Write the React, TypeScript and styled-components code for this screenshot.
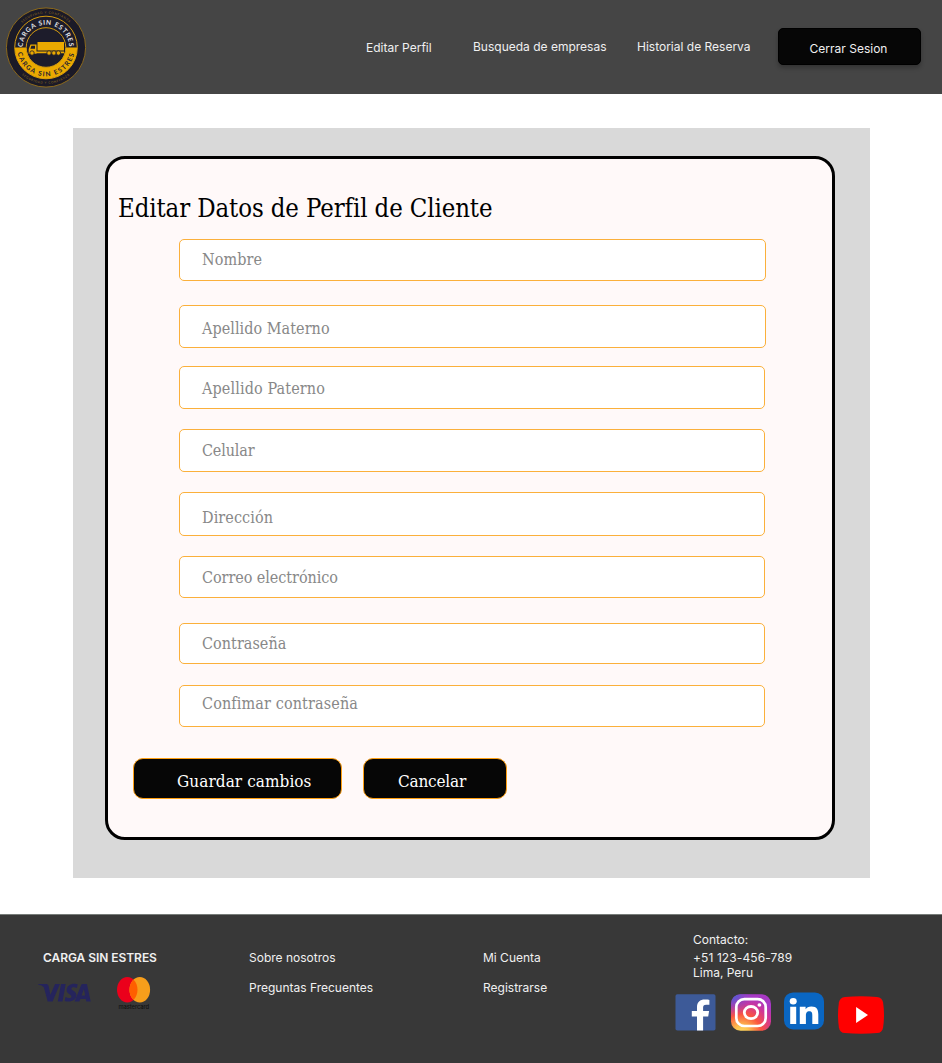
import React from "react";
import styled, { createGlobalStyle } from "styled-components";

const GlobalStyle = createGlobalStyle`
  *, *::before, *::after { box-sizing: border-box; }
  body {
    margin: 0;
    background: #fff;
    font-family: Inter, "Liberation Sans", sans-serif;
  }
`;

const serif = `"DejaVu Serif Condensed", "DejaVu Serif", serif`;

const Page = styled.div`
  width: 942px;
  height: 1063px;
  display: flex;
  flex-direction: column;
  overflow: hidden;
`;

const Header = styled.header`
  height: 94px;
  flex: none;
  display: flex;
  align-items: flex-start;
  background: #454545;
  padding-left: 5px;
`;

const LogoBox = styled.div`
  width: 82px;
  padding-top: 7px;
  margin-right: 279px;
`;

const Nav = styled.nav`
  display: flex;
  align-items: flex-start;
`;

const NavLink = styled.a<{ $width: number; $top: number }>`
  width: ${(p) => p.$width}px;
  margin-top: ${(p) => p.$top}px;
  font-size: 12px;
  line-height: 16px;
  color: #f0f0f0;
  white-space: nowrap;
`;

const LogoutButton = styled.button`
  width: 143px;
  height: 37px;
  margin-top: 28px;
  padding: 4px 0 0;
  border: 1px solid #000;
  border-radius: 5px;
  background: #060606;
  box-shadow: 0 3px 4px rgba(0, 0, 0, 0.25);
  color: #f0f0f0;
  font: 12px/16px Inter, "Liberation Sans", sans-serif;
  text-indent: -2px;
`;

const Panel = styled.main`
  width: 797px;
  height: 750px;
  flex: none;
  margin: 34px 0 36px 73px;
  padding: 28px 35px 38px 32px;
  background: #d9d9d9;
`;

const Card = styled.form`
  height: 684px;
  display: flex;
  flex-direction: column;
  border: 3px solid #000;
  border-radius: 20px;
  background: #fff9f9;
`;

const Title = styled.h1`
  margin: 32px 0 0 10px;
  height: 48px;
  font: 400 25.5px/34px ${serif};
  letter-spacing: -0.1px;
  color: #000;
  white-space: nowrap;
`;

const Field = styled.label<{ $w: number; $h: number; $gap: number; $top: number; $spacing: number }>`
  width: ${(p) => p.$w}px;
  height: ${(p) => p.$h}px;
  flex: none;
  margin: 0 0 ${(p) => p.$gap}px 71px;
  padding: ${(p) => p.$top}px 0 0 22px;
  border: 1px solid #fbb03b;
  border-radius: 5px;
  background: #fff;
  font: 16px/20px ${serif};
  letter-spacing: ${(p) => p.$spacing}px;
  color: #888;
  white-space: nowrap;
`;

const Actions = styled.div`
  display: flex;
  gap: 21px;
  margin-left: 25px;
`;

const ActionButton = styled.button<{ $w: number; $left: number; $spacing: number }>`
  width: ${(p) => p.$w}px;
  height: 41px;
  padding: 4px 0 0 ${(p) => p.$left}px;
  border: 1px solid #ffa012;
  border-radius: 10px;
  background: #060606;
  color: #fff;
  font: 17px/22px ${serif};
  letter-spacing: ${(p) => p.$spacing}px;
  text-align: left;
  white-space: nowrap;
`;

const Footer = styled.footer`
  height: 149px;
  flex: none;
  display: flex;
  border-top: 1px solid #777c79;
  background: #383838;
  color: #f0f0f0;
  font-size: 12px;
  line-height: 16px;
  white-space: nowrap;
`;

const BrandColumn = styled.section`
  width: 249px;
  padding: 35px 0 0 38px;
`;

const BrandName = styled.div`
  padding-left: 5px;
  font-weight: 600;
  letter-spacing: -0.05px;
`;

const Payments = styled.div`
  display: flex;
  gap: 26px;
  margin-top: 10px;
`;

const LinkColumn = styled.section<{ $w: number }>`
  width: ${(p) => p.$w}px;
  display: flex;
  flex-direction: column;
  gap: 14px;
  padding-top: 35px;
`;

const ContactColumn = styled.section`
  padding-top: 17px;
`;

const ContactLine = styled.div<{ $gap?: number; $spacing?: number }>`
  height: 15px;
  padding-left: 18px;
  margin-bottom: ${(p) => p.$gap ?? 0}px;
  letter-spacing: ${(p) => p.$spacing ?? 0}px;
`;

const Socials = styled.div`
  display: flex;
  align-items: flex-start;
  margin-top: 12px;
`;

const SocialLink = styled.a<{ $top: number; $gap: number }>`
  display: block;
  height: 40px;
  margin: ${(p) => p.$top}px ${(p) => p.$gap}px 0 0;
`;

const Block = styled.svg`
  display: block;
`;

function Logo() {
  return (
    <Block width="82" height="82" viewBox="0 0 82 82">
      <defs>
        <path id="arcTop" d="M17.7 41a23.3 23.3 0 0 1 46.6 0" />
        <path id="arcBottom" d="M12.2 40.5a28.8 28.8 0 0 0 57.6 0" />
        <path id="rimTop" d="M6.5 41a34.5 34.5 0 0 1 69 0" />
        <path id="rimBottom" d="M4.6 40.5a36.4 36.4 0 0 0 72.8 0" />
      </defs>
      <circle cx="41" cy="40.5" r="39.6" fill="#1b1a27" stroke="#8b681b" strokeWidth="1" />
      <circle cx="41" cy="40.5" r="31.3" fill="#1d1c2b" stroke="#d39a10" strokeWidth="1" />
      <path d="M9.8 40.5h62.4a31.2 31.2 0 0 1-62.4 0z" fill="#eba900" />
      <circle cx="41" cy="40.5" r="19.8" fill="#1d1c2b" stroke="#d39a10" strokeWidth="1" />
      <g fontFamily="Lato, sans-serif" textAnchor="middle">
        <g fontSize="6.6" fontWeight="700">
          <text fill="#e4e4e8" letterSpacing="0.75"><textPath href="#arcTop" startOffset="50%">CARGA SIN ESTRES</textPath></text>
          <text fill="#252130" letterSpacing="1.3"><textPath href="#arcBottom" startOffset="50%">CARGA SIN ESTRES</textPath></text>
        </g>
        <g fontSize="3" letterSpacing="0.7" fill="#9b741c">
          <text><textPath href="#rimTop" startOffset="50%">SEGURIDAD Y CONFIANZA</textPath></text>
          <text><textPath href="#rimBottom" startOffset="50%">SEGURIDAD Y CONFIANZA</textPath></text>
        </g>
      </g>
      <path d="M32.5 35h26.5v8.4H32.5zM25.5 37.5h6v9.3h-7.8V42zM31 44.4h28v1.8H31z" fill="#eba900" />
      <path d="M26.4 38.8h3.6v3h-4.6z" fill="#1d1c2b" />
      <g fill="#eba900" stroke="#1d1c2b" strokeWidth="0.8">
        <circle cx="27" cy="46" r="2.2" />
        <circle cx="44" cy="46" r="2.2" />
        <circle cx="48.9" cy="46" r="2.2" />
        <circle cx="53.4" cy="46" r="2.2" />
      </g>
    </Block>
  );
}

function Visa() {
  return (
    <Block width="53" height="36" viewBox="0 0 53 36">
      <g fill="#25245c">
        <path d="M0 8h7.8c1.5 0 2.4.5 2.8 2l1.8 8.8L17.1 8h4.8l-7.3 17.5H9.7L5.9 11.4C5 10 2.4 9 0 8.5z" />
        <path d="M23 8h4.7l-3.2 17.5h-4.7z" />
        <path d="M39.7 8.3l-.8 3.7c-2.8-1.2-5.5-.7-5.5.7 0 1.9 5 2.3 5 6.4 0 5.8-6.7 7.7-11.7 5.8l.8-3.8c3.1 1.5 6 1.1 6-.7 0-2-4.9-2.2-4.9-6.4 0-5.3 6.5-7.6 11.1-5.7z" />
        <path fillRule="evenodd" d="M45 8h3.9L52.7 25.5h-4.4l-.5-2.6h-5.4l-1.1 2.6h-4.7L43 9.4c.4-.9 1-1.4 2-1.4zm.9 5.1l-2.3 6.3h3.5z" />
      </g>
    </Block>
  );
}

function Mastercard() {
  return (
    <Block width="34" height="36" viewBox="0 0 34 36">
      <ellipse cx="10.3" cy="13.8" rx="10.3" ry="12.8" fill="#eb001b" />
      <ellipse cx="22.8" cy="13.8" rx="10.3" ry="12.8" fill="#f79e1b" />
      <path d="M16.5 3.6c5.4 5.3 5.4 15.1 0 20.4-5.4-5.3-5.4-15.1 0-20.4z" fill="#ff5f00" />
      <text x="1.4" y="32.6" textLength="30.8" fontFamily="Inter, sans-serif" fontSize="5.8" fontWeight="500" fill="#111">mastercard</text>
    </Block>
  );
}

function Facebook() {
  return (
    <Block width="41" height="37" viewBox="0 0 41 37">
      <rect x="0.5" y="0.3" width="40" height="36.2" rx="1.8" fill="#3d5a98" />
      <path d="M22 36.5V22.6h-5.2v-5.5H22v-4.2c0-4.7 3.1-7.3 7.7-7.3 2.2 0 4.2.2 4.7.3v4.9h-3.2c-2.5 0-3.1 1.2-3.1 2.8v3.5h6l-.9 5.5h-5.1v13.9z" fill="#fff" />
    </Block>
  );
}

function Instagram() {
  return (
    <Block width="40" height="37" viewBox="0 0 40 37">
      <defs>
        <radialGradient id="igWarm" cx="0.26" cy="1.05" r="1">
          <stop offset="0" stopColor="#ffdc65" />
          <stop offset="0.18" stopColor="#fdc24f" />
          <stop offset="0.5" stopColor="#fb553f" />
          <stop offset="0.8" stopColor="#cf359a" />
          <stop offset="1" stopColor="#a839c4" />
        </radialGradient>
        <radialGradient id="igCool" cx="0" cy="0" r="0.62">
          <stop offset="0" stopColor="#3b6fdd" />
          <stop offset="0.25" stopColor="#5a58d2" stopOpacity="0.85" />
          <stop offset="1" stopColor="#a33bc6" stopOpacity="0" />
        </radialGradient>
      </defs>
      <rect y="0.3" width="40" height="36.4" rx="9.5" fill="url(#igWarm)" />
      <rect y="0.3" width="40" height="36.4" rx="9.5" fill="url(#igCool)" />
      <rect x="5.3" y="5.2" width="29.4" height="26.8" rx="8" fill="none" stroke="#fff" strokeWidth="2.7" />
      <ellipse cx="20" cy="18.6" rx="6.7" ry="6.1" fill="none" stroke="#fff" strokeWidth="2.8" />
      <ellipse cx="28.4" cy="11" rx="1.9" ry="1.7" fill="#fff" />
    </Block>
  );
}

function LinkedIn() {
  return (
    <Block width="40" height="38" viewBox="0 0 40 38">
      <rect y="0.4" width="40" height="37" rx="9" fill="#0a66c2" />
      <g fill="#fff">
        <ellipse cx="9.2" cy="9.2" rx="3.5" ry="3.2" />
        <path d="M6.2 14.8h6v17.3h-6zM15.8 14.8h5.8v2.4c.9-1.5 2.9-2.8 5.8-2.8 5.7 0 6.9 3.4 6.9 8.2v9.5h-6v-8.5c0-2.1-.1-4.4-2.9-4.4s-3.5 2.2-3.5 4.2v8.7h-6.1z" />
      </g>
    </Block>
  );
}

function YouTube() {
  return (
    <Block width="46" height="38" viewBox="0 0 46 38">
      <path d="M7 .9C17 .1 29 .1 39 .9c3.5.3 5.6 2.4 6.1 5.7 1.2 8 1.2 16.8 0 24.8-.5 3.3-2.6 5.4-6.1 5.7-10 .8-22 .8-32 0-3.5-.3-5.6-2.4-6.1-5.7-1.2-8-1.2-16.8 0-24.8C1.4 3.3 3.5 1.2 7 .9z" fill="#f00" />
      <path d="M18.1 10.9v16.2L30 19z" fill="#fff" />
    </Block>
  );
}

const fields = [
  { text: "Nombre", w: 587, h: 42, gap: 24, top: 10, spacing: 0.1 },
  { text: "Apellido Materno", w: 587, h: 43, gap: 18, top: 13, spacing: 0.05 },
  { text: "Apellido Paterno", w: 586, h: 43, gap: 20, top: 12, spacing: 0.12 },
  { text: "Celular", w: 586, h: 43, gap: 20, top: 11, spacing: -0.16 },
  { text: "Dirección", w: 586, h: 44, gap: 20, top: 15, spacing: 0.1 },
  { text: "Correo electrónico", w: 586, h: 42, gap: 25, top: 11, spacing: -0.05 },
  { text: "Contraseña", w: 586, h: 41, gap: 21, top: 10, spacing: 0.04 },
  { text: "Confimar contraseña", w: 586, h: 42, gap: 31, top: 8, spacing: 0.13 },
];

export default function App() {
  return (
    <Page>
      <GlobalStyle />
      <Header>
        <LogoBox><Logo /></LogoBox>
        <Nav>
          <NavLink $width={107} $top={40}>Editar Perfil</NavLink>
          <NavLink $width={164} $top={39}>Busqueda de empresas</NavLink>
          <NavLink $width={141} $top={39}>Historial de Reserva</NavLink>
          <LogoutButton type="button">Cerrar Sesion</LogoutButton>
        </Nav>
      </Header>
      <Panel>
        <Card>
          <Title>Editar Datos de Perfil de Cliente</Title>
          {fields.map((f) => (
            <Field key={f.text} $w={f.w} $h={f.h} $gap={f.gap} $top={f.top} $spacing={f.spacing}>
              {f.text}
            </Field>
          ))}
          <Actions>
            <ActionButton type="button" $w={209} $left={43} $spacing={0.07}>Guardar cambios</ActionButton>
            <ActionButton type="button" $w={144} $left={34} $spacing={-0.2}>Cancelar</ActionButton>
          </Actions>
        </Card>
      </Panel>
      <Footer>
        <BrandColumn>
          <BrandName>CARGA SIN ESTRES</BrandName>
          <Payments>
            <Visa />
            <Mastercard />
          </Payments>
        </BrandColumn>
        <LinkColumn $w={234}>
          <span>Sobre nosotros</span>
          <span>Preguntas Frecuentes</span>
        </LinkColumn>
        <LinkColumn $w={192}>
          <span>Mi Cuenta</span>
          <span>Registrarse</span>
        </LinkColumn>
        <ContactColumn>
          <ContactLine $gap={3}>Contacto:</ContactLine>
          <ContactLine $spacing={0.1}>+51 123-456-789</ContactLine>
          <ContactLine>Lima, Peru</ContactLine>
          <Socials>
            <SocialLink $top={2} $gap={15}><Facebook /></SocialLink>
            <SocialLink $top={2} $gap={13}><Instagram /></SocialLink>
            <SocialLink $top={0} $gap={14}><LinkedIn /></SocialLink>
            <SocialLink $top={4} $gap={0}><YouTube /></SocialLink>
          </Socials>
        </ContactColumn>
      </Footer>
    </Page>
  );
}
